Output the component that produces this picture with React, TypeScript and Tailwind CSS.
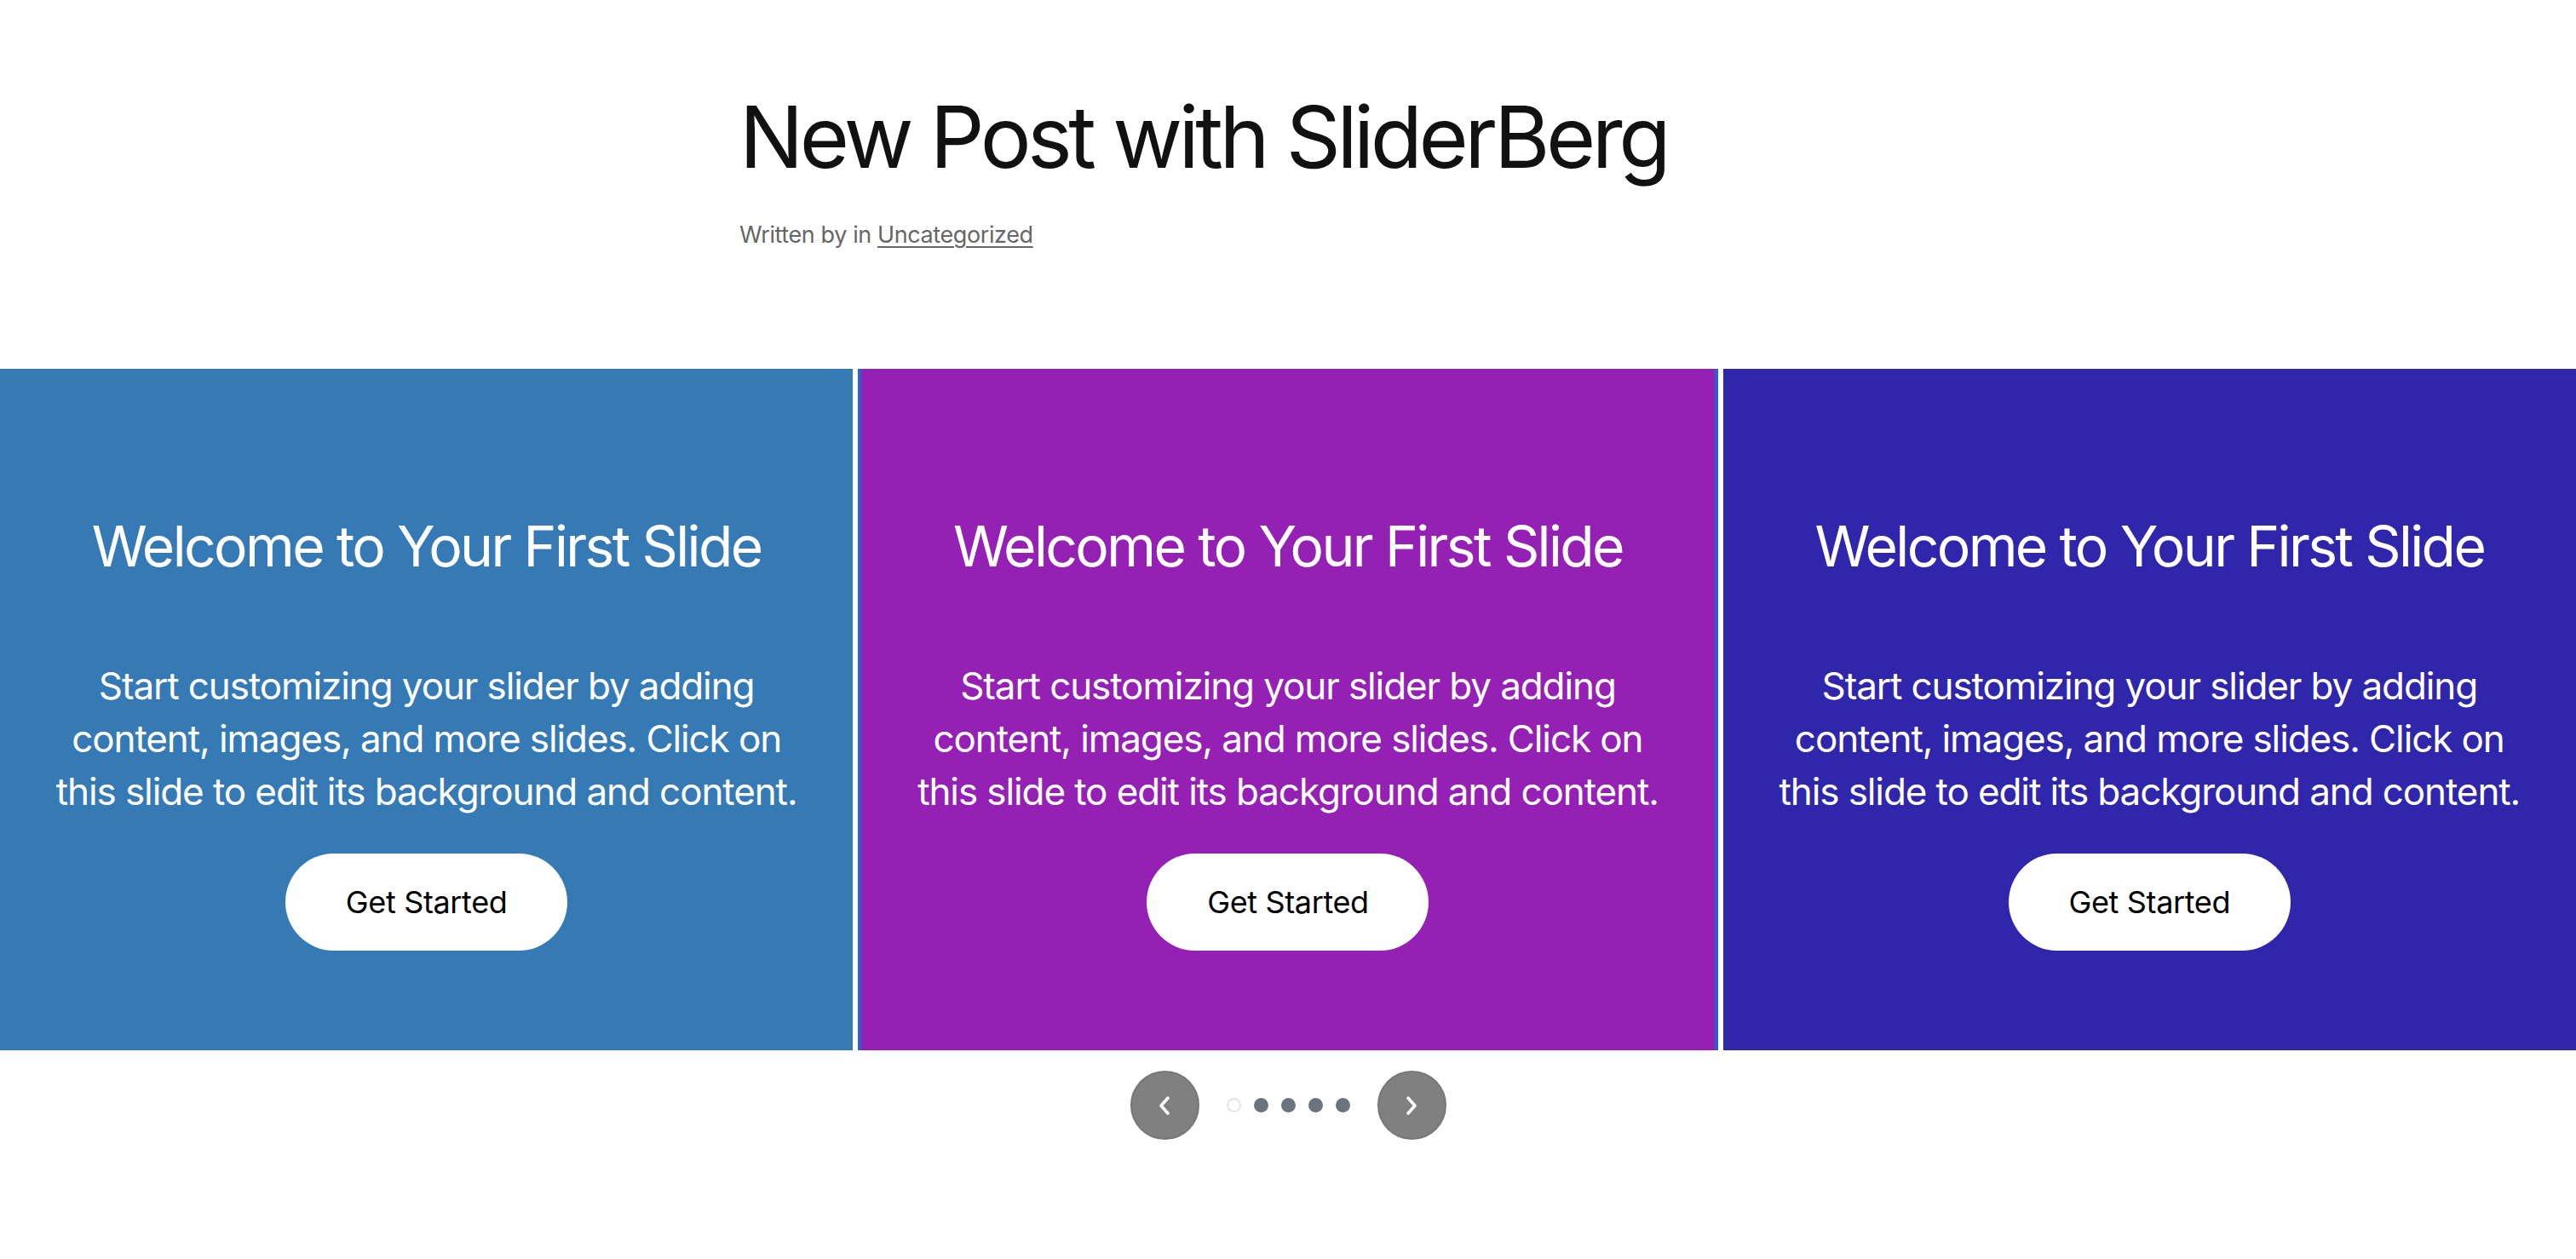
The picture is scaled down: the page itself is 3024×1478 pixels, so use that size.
import React from 'react';

const slides = [
  { bg: 'bg-[#367ab5]', edge: '' },
  { bg: 'bg-[#9520b4]', edge: 'border-x-4 border-[#2a62c8]' },
  { bg: 'bg-[#3026ab]', edge: '' },
];

const Slide: React.FC<{ bg: string; edge: string }> = ({ bg, edge }) => (
  <div className={`flex-1 h-[800px] flex flex-col items-center text-white ${bg} ${edge}`}>
    <h2 className="mt-[168px] text-[66px] leading-[80px] tracking-[-0.04em] font-normal">
      Welcome to Your First Slide
    </h2>
    <p className="mt-[93px] text-[44px] leading-[62px] tracking-[-0.025em] text-center">
      Start customizing your slider by adding
      <br />
      content, images, and more slides. Click on
      <br />
      this slide to edit its background and content.
    </p>
    <button className="mt-[42px] w-[331px] h-[114px] rounded-full bg-white text-black text-[36px] tracking-[-0.01em]">
      Get Started
    </button>
  </div>
);

const App: React.FC = () => {
  return (
    <div className="min-h-[1478px] bg-white font-['Inter','Noto_Sans',sans-serif]">
      {/* Post header */}
      <header className="w-[1288px] mx-auto pt-[106px]">
        <h1 className="text-[100px] leading-[1.1] tracking-[-0.045em] text-[#111111] font-normal">
          New Post with SliderBerg
        </h1>
        <p className="mt-[40px] text-[27px] leading-[39px] tracking-[-0.015em] text-[#666666]">
          Written by in{' '}
          <a href="#" className="underline underline-offset-4">
            Uncategorized
          </a>
        </p>
      </header>

      {/* Slider */}
      <section className="mt-[138px]">
        <div className="flex gap-[6px]">
          {slides.map((s, i) => (
            <Slide key={i} bg={s.bg} edge={s.edge} />
          ))}
        </div>

        <div className="mt-[24px] flex items-center justify-center">
          <button className="w-[81px] h-[81px] rounded-full bg-[#808080] border-2 border-[#777777] flex items-center justify-center">
            <svg width="16" height="26" viewBox="0 0 16 26" fill="none" stroke="white" strokeWidth="3.5" strokeLinecap="round" strokeLinejoin="round">
              <path d="M12 4L4 13l8 9" />
            </svg>
          </button>
          <div className="mx-[32px] flex items-center gap-[15px]">
            <span className="w-[17px] h-[17px] rounded-full border-2 border-[#e5e5e5]" />
            <span className="w-[17px] h-[17px] rounded-full bg-[#6b7280]" />
            <span className="w-[17px] h-[17px] rounded-full bg-[#6b7280]" />
            <span className="w-[17px] h-[17px] rounded-full bg-[#6b7280]" />
            <span className="w-[17px] h-[17px] rounded-full bg-[#6b7280]" />
          </div>
          <button className="w-[81px] h-[81px] rounded-full bg-[#808080] border-2 border-[#777777] flex items-center justify-center">
            <svg width="16" height="26" viewBox="0 0 16 26" fill="none" stroke="white" strokeWidth="3.5" strokeLinecap="round" strokeLinejoin="round">
              <path d="M4 4l8 9-8 9" />
            </svg>
          </button>
        </div>
      </section>
    </div>
  );
};

export default App;
